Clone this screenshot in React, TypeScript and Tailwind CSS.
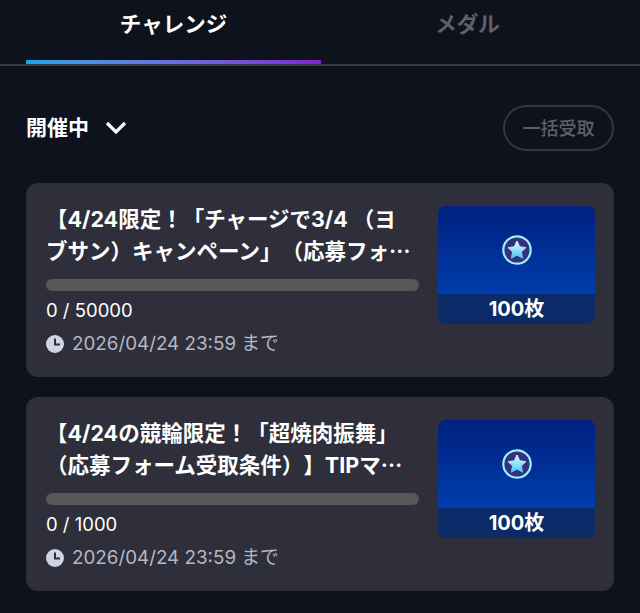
function StarBadge() {
  return (
    <svg width="30" height="30" viewBox="0 0 30 30">
      <defs>
        <linearGradient id="starFill" x1="0" y1="0" x2="0" y2="1">
          <stop offset="0" stopColor="#dcffff" />
          <stop offset="1" stopColor="#4cc4f8" />
        </linearGradient>
      </defs>
      <circle cx="15" cy="15" r="13.7" fill="#37307e" stroke="#9af0fb" strokeWidth="2.2" />
      <path
        d="M15 6l2.7 5.8 6.3.8-4.6 4.3 1.2 6.3-5.6-3.1-5.6 3.1 1.2-6.3-4.6-4.3 6.3-.8z"
        fill="url(#starFill)"
        stroke="url(#starFill)"
        strokeWidth="1"
        strokeLinejoin="round"
      />
    </svg>
  );
}

function ClockIcon() {
  return (
    <svg width="18" height="18" viewBox="0 0 18 18" className="shrink-0">
      <circle cx="9" cy="9" r="9" fill="#cfd5e3" />
      <path d="M9 3.6V9.6H14" fill="none" stroke="#2e2f3a" strokeWidth="2" />
    </svg>
  );
}

function ChallengeCard({ lines, total }: { lines: [string, string]; total: number }) {
  return (
    <div className="flex h-[194px] justify-between rounded-xl bg-[#2e2f3a] pt-5 pl-5 pr-[19px]">
      <div className="w-[373px]">
        {/* two clamped lines, the dots are the JP centred glyph */}
        <div className="h-[64px] text-[21.5px] leading-[32px] font-bold whitespace-nowrap text-white [text-spacing-trim:space-all]">
          <p className="h-8">{lines[0]}</p>
          <p className="h-8">
            {lines[1]}
            <span className="font-['Noto_Sans_CJK_JP'] leading-none">…</span>
          </p>
        </div>
        <div className="mt-3 h-3 rounded-full bg-[#565759]" />
        <p className="mt-[7px] text-[18.5px] leading-[24px] text-white">0 / {total}</p>
        <div className="mt-[10px] flex items-center gap-2 text-[18.8px] leading-[24px] text-[#b4b8c6]">
          <ClockIcon />
          <span>2026/04/24 23:59 まで</span>
        </div>
      </div>
      <div className="mt-[3px] flex h-[118px] w-[157px] flex-col overflow-hidden rounded-lg bg-gradient-to-b from-[#00207f] to-[#0047bd]">
        <div className="flex flex-1 items-center justify-center">
          <StarBadge />
        </div>
        <div className="flex h-[30px] items-center justify-center bg-[#0a2a68] text-[20px] font-bold text-white">
          100枚
        </div>
      </div>
    </div>
  );
}

export default function App() {
  return (
    <div className="h-[613px] w-[640px] overflow-hidden bg-[#0e121d] font-['Inter','Noto_Sans_CJK_JP',sans-serif]">
      <div className="flex h-[66px] border-b-2 border-[#383b4a] px-[26px]">
        <div className="relative flex h-[64px] w-[295px] justify-center pt-[8px] text-[21.5px] leading-[32px] font-bold text-white">
          チャレンジ
          <div className="absolute inset-x-0 bottom-0 h-1 bg-gradient-to-r from-[#0ea5e9] to-[#7e1fd0]" />
        </div>
        <div className="flex h-[64px] w-[293px] justify-center pt-[8px] text-[21.5px] leading-[32px] font-bold text-[#5f6168]">
          メダル
        </div>
      </div>
      <div className="flex items-center justify-between pt-[39px] pr-[26px] pb-[32px] pl-[26px]">
        <div className="flex items-center gap-[16px]">
          <span className="text-[21px] leading-[46px] font-bold text-white">開催中</span>
          <svg width="22" height="14" viewBox="0 0 22 14" fill="none" stroke="white" strokeWidth="3.2">
            <path d="M2 2l9 9 9-9" />
          </svg>
        </div>
        <div className="flex h-[46px] w-[111px] items-center justify-center rounded-full border-2 border-[#34363f] text-[18px] font-medium text-[#5f6168]">
          一括受取
        </div>
      </div>
      <div className="flex flex-col gap-5 px-[26px]">
        <ChallengeCard lines={["【4/24限定！「チャージで3/4 （ヨ", "ブサン）キャンペーン」（応募フォ"]} total={50000} />
        <ChallengeCard lines={["【4/24の競輪限定！「超焼肉振舞」", "（応募フォーム受取条件）】TIPマ"]} total={1000} />
      </div>
    </div>
  );
}
